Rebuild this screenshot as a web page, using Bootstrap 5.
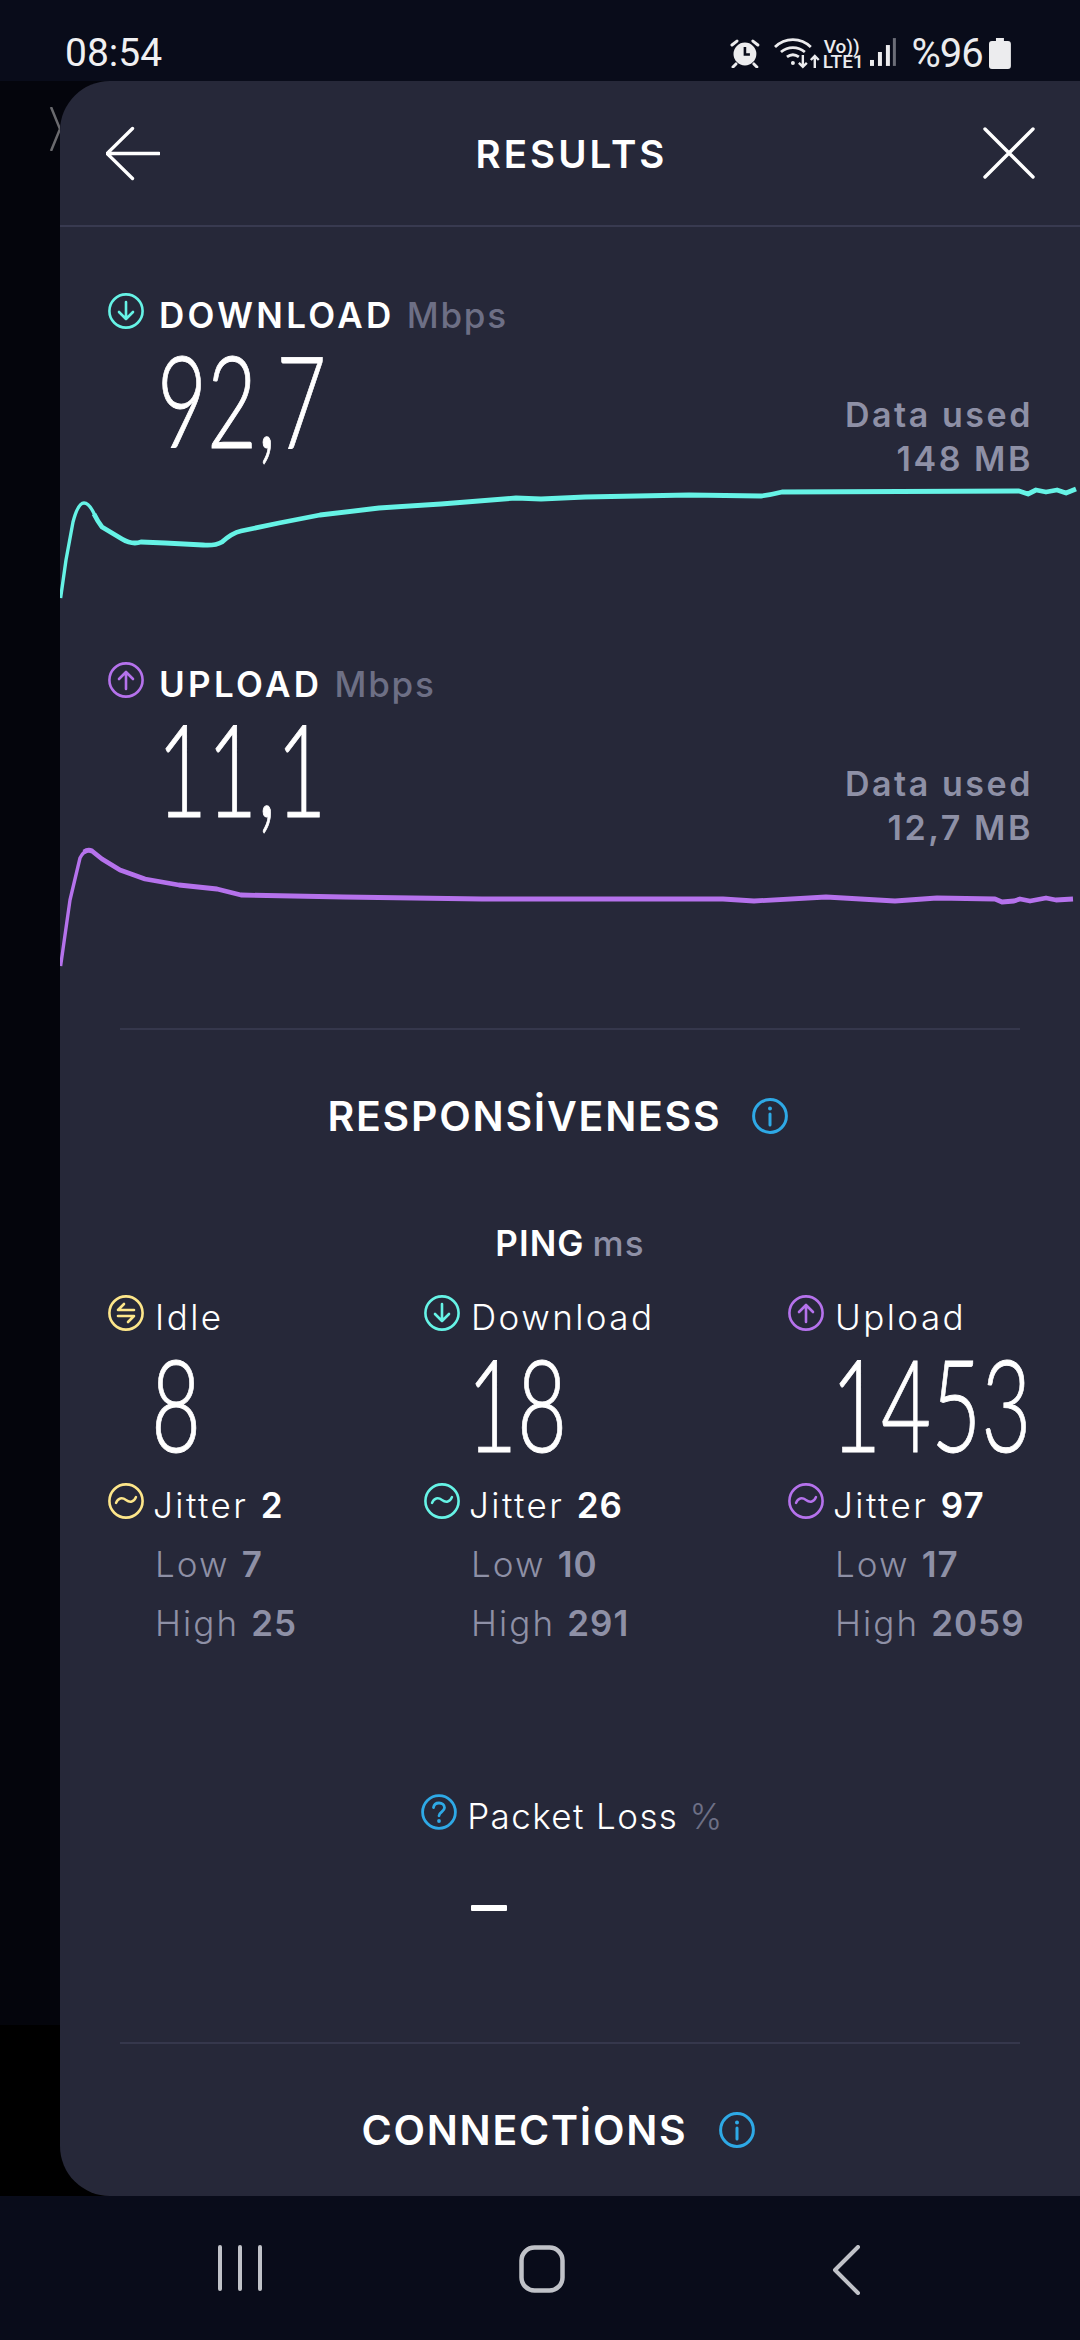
<!DOCTYPE html>
<html lang="en">
<head>
<meta charset="utf-8">
<title>Results</title>
<link href="https://cdn.jsdelivr.net/npm/bootstrap@5.3.0/dist/css/bootstrap.min.css" rel="stylesheet">
<style>
html,body{margin:0;width:1080px;height:2340px;overflow:hidden;background:#090c1a;font-family:Inter,"Open Sans",sans-serif;color:#fff}
.status-top{height:81px;padding:0 69px 0 65px}
.clock{font:400 39px/1 Roboto,sans-serif;margin-top:34px;color:#f0f0f2}
.status-icons{margin-top:38px;color:#ececee;width:281px}
.net-type{font:500 19px/15px Roboto,sans-serif;text-align:center;width:38px;margin-left:3px;margin-top:1px;white-space:nowrap}
.pct{font:400 40px/32px Roboto,sans-serif;margin-left:15px;width:78px;letter-spacing:-1px;white-space:nowrap}
.signal{margin-left:9px}
.wifi{margin-left:14px}
.stage{height:2115px;background:linear-gradient(#04050c 0,#04050c 1944px,#000 1944px)}
.left-strip{width:60px;flex:none}
.left-strip svg{display:block;margin-top:26px}
.sheet{flex:1;background:#262839;border-radius:50px 0 0 50px;overflow:hidden}
.sheet-head{height:146px;border-bottom:2px solid #383a50;padding:0 45px 0 46px}
.sheet-title{font-size:38.5px;font-weight:600;letter-spacing:.08em;line-height:1;padding-top:2px}
.speed-row{height:183px;padding:0 47px 0 48px}
.speed-row.first{margin-top:66px}
.speed-row.second{margin-top:56px}
.metric-head{height:36px;gap:15px}
.metric-name{font-size:35px;line-height:36px;font-weight:600;letter-spacing:.095em;margin-top:4px;white-space:nowrap}
.metric-name span{color:#6d6f85;font-weight:500;letter-spacing:.05em;margin-left:0}
.big-num{font-family:Lato,"Liberation Sans",sans-serif;font-weight:300;-webkit-text-stroke:.9px #fff;font-size:128px;line-height:100px;color:#fff;transform:scaleX(.675);transform-origin:0 0;white-space:nowrap}
.speed-num{margin:20px 0 0 49px}
.data-used{font-size:34px;line-height:44px;font-weight:600;color:#8e90a6;text-align:right;margin-bottom:-5px;letter-spacing:.075em;white-space:nowrap}
.chart{display:block;width:1020px;height:130px}
.rule{height:2px;background:#35374c;margin:0 60px}
.rule.top-rule{margin-top:53px}
.section-title{gap:31px;padding-right:24px;margin-top:68px;height:36px}
.section-title span{font-size:41px;font-weight:600;line-height:36px;letter-spacing:.043em;white-space:nowrap}
.ping-title{font-size:35px;line-height:36px;font-weight:600;margin-top:91px;gap:8px;letter-spacing:.03em}
.ping-title span{color:#8e90a6;font-weight:500}
.ping-cols{margin-top:34px;padding-left:48px}
.ping-a{width:316px;flex:none}.ping-b{width:364px;flex:none}.ping-c{width:232px;flex:none}
.ping-head{gap:11px;height:36px;font-size:35px;font-weight:300;line-height:36px;letter-spacing:.07em;white-space:nowrap}
.ping-head b{font-weight:600;letter-spacing:.03em}
.ping-head>span{margin-top:4px}
.ping-num{margin:22px 0 0 43px;height:100px}
.jit{margin-top:30px;gap:9px}
.sub-line{font-size:35px;font-weight:300;line-height:59px;color:#8e90a6;padding-left:47px;letter-spacing:.06em;white-space:nowrap}
.sub-line b{font-weight:600;letter-spacing:.03em}
.sub-first{margin-top:16px}
.loss{margin-top:141px;gap:10px;height:36px;padding-left:5px;font-size:35px;font-weight:300;line-height:36px;letter-spacing:.04em;white-space:nowrap}
.loss em{font-style:normal;color:#6d6f85}
.dash{width:36px;height:6px;background:#fff;border-radius:1px;margin:75px 0 0 411px}
.rule.low-rule{margin-top:131px}
.bottom-nav{height:144px;padding-top:49px}
.nav-slot{width:46px}
.nav-slot svg{display:block}
</style>
</head>
<body>
<svg width="0" height="0" class="d-block position-absolute">
  <defs>
    <symbol id="ic-down" viewBox="0 0 36 36"><circle cx="18" cy="18" r="16.6" fill="none" stroke="currentColor" stroke-width="2.6"/><path d="M18 9v17M11 19l7 7 7-7" fill="none" stroke="currentColor" stroke-width="2.6" stroke-linecap="round" stroke-linejoin="round"/></symbol>
    <symbol id="ic-up" viewBox="0 0 36 36"><circle cx="18" cy="18" r="16.6" fill="none" stroke="currentColor" stroke-width="2.6"/><path d="M18 27V10M11 17l7-7 7 7" fill="none" stroke="currentColor" stroke-width="2.6" stroke-linecap="round" stroke-linejoin="round"/></symbol>
    <symbol id="ic-idle" viewBox="0 0 36 36"><circle cx="18" cy="18" r="16.6" fill="none" stroke="currentColor" stroke-width="2.6"/><path d="M26 15H10l6-6M10 21h16l-6 6" fill="none" stroke="currentColor" stroke-width="2.6" stroke-linecap="round" stroke-linejoin="round"/></symbol>
    <symbol id="ic-wave" viewBox="0 0 36 36"><circle cx="18" cy="18" r="16.6" fill="none" stroke="currentColor" stroke-width="2.6"/><path d="M8 20c2-5 6-6 10-3s8 2 10-3" fill="none" stroke="currentColor" stroke-width="2.4" stroke-linecap="round"/></symbol>
    <symbol id="ic-info" viewBox="0 0 36 36"><circle cx="18" cy="18" r="16.4" fill="none" stroke="currentColor" stroke-width="3"/><path d="M18 16v11" fill="none" stroke="currentColor" stroke-width="3" stroke-linecap="round"/><circle cx="18" cy="10.5" r="2" fill="currentColor"/></symbol>
    <symbol id="ic-help" viewBox="0 0 36 36"><circle cx="18" cy="18" r="16.4" fill="none" stroke="currentColor" stroke-width="2.8"/><path d="M12.5 13.5c.5-3 2.800-4.500 5.500-4.500 3.200 0 5.500 2 5.500 4.800 0 3.800-5.500 4.200-5.500 8" fill="none" stroke="currentColor" stroke-width="2.8" stroke-linecap="round"/><circle cx="18" cy="27" r="1.900" fill="currentColor"/></symbol>
  </defs>
</svg>

<div class="status-top d-flex justify-content-between">
  <div class="clock">08:54</div>
  <div class="status-icons d-flex align-items-start">
    <svg width="30" height="30" viewBox="0 0 30 30" class="flex-none"><circle cx="15" cy="16" r="11.500" fill="#ececee"/><path d="M15 9v7.500h5" fill="none" stroke="#090c1a" stroke-width="2.600"/><path d="M2 7l5-4M28 7l-5-4M6 26l-3 3M24 26l3 3" stroke="#ececee" stroke-width="3" stroke-linecap="round"/></svg>
    <svg width="46" height="32" viewBox="0 0 46 32" class="wifi"><path d="M1 9C11-1 27-1 37 9M7 14c7-6 17-6 24 0M13 19c4-3 8-3 12 0" fill="none" stroke="#ececee" stroke-width="2.800"/><circle cx="19" cy="25" r="2" fill="#ececee"/><path d="M29 17v12M25 25l4 4 4-4M41 30V18M37 22l4-4 4 4" fill="none" stroke="#ececee" stroke-width="2.400"/></svg>
    <div class="net-type">Vo))<br>LTE1</div>
    <svg width="27" height="30" viewBox="0 0 27 30" class="signal"><rect x="0" y="22" width="4" height="6" fill="#ececee"/><rect x="8" y="14" width="4" height="14" fill="#ececee"/><rect x="16" y="7" width="4" height="21" fill="#ececee"/><rect x="23" y="0" width="3" height="28" fill="#6c6e78"/></svg>
    <div class="pct">%96</div>
    <svg width="22" height="31" viewBox="0 0 22 31"><path d="M7 0h8v3h4a3 3 0 0 1 3 3v22a3 3 0 0 1-3 3H3a3 3 0 0 1-3-3V6a3 3 0 0 1 3-3h4z" fill="#ececee"/></svg>
  </div>
</div>

<div class="stage d-flex">
  <div class="left-strip"><svg width="60" height="44" viewBox="0 0 60 44"><path d="M51 0l9 22L51 44" fill="none" stroke="#6a6a6e" stroke-width="2.500"/></svg></div>
  <main class="sheet">
    <header class="sheet-head d-flex align-items-center justify-content-between">
      <svg width="54" height="55" viewBox="0 0 55 55"><path d="M1 27.500h53M27 2L1 27.500 27 53" fill="none" stroke="#fff" stroke-width="3.400" stroke-linecap="round" stroke-linejoin="round"/></svg>
      <div class="sheet-title">RESULTS</div>
      <svg width="52" height="52" viewBox="0 0 52 52"><path d="M2 2l48 48M50 2L2 50" fill="none" stroke="#fff" stroke-width="3.400" stroke-linecap="round"/></svg>
    </header>

    <section class="speed-row first d-flex justify-content-between">
      <div>
        <div class="metric-head d-flex"><svg width="36" height="36" style="color:#66f3e6"><use href="#ic-down"/></svg><div class="metric-name">DOWNLOAD <span>Mbps</span></div></div>
        <div class="big-num speed-num">92,7</div>
      </div>
      <div class="data-used align-self-end">Data used<br>148 MB</div>
    </section>
    <svg class="chart" viewBox="60 476 1020 130">
      <path d="M60.600 598L66 560 73 522Q78 503 84 503 90 503 96 518" fill="none" stroke="#66f3e6" stroke-width="3.400" stroke-linejoin="round"/>
      <path d="M94 514Q98 522 102 527L122 539Q132 545 141 542L165 543 203 545Q215 546 222 542Q232 533 241 531L279 523 320 515 379 508 441 504 516 498 541 499 585 497 689 495 761 496Q770 495 782 492L1019 491 1028 494 1036 490 1046 492 1057 490 1066 493 1076 489" fill="none" stroke="#66f3e6" stroke-width="4.800" stroke-linejoin="round"/>
    </svg>

    <section class="speed-row second d-flex justify-content-between">
      <div>
        <div class="metric-head d-flex"><svg width="36" height="36" style="color:#b572ec"><use href="#ic-up"/></svg><div class="metric-name">UPLOAD <span>Mbps</span></div></div>
        <div class="big-num speed-num">11,1</div>
      </div>
      <div class="data-used align-self-end">Data used<br>12,7 MB</div>
    </section>
    <svg class="chart" viewBox="60 845 1020 130">
      <path d="M60.600 966L70 900 80 858Q84 850 90 850" fill="none" stroke="#b572ec" stroke-width="3.400" stroke-linejoin="round"/>
      <path d="M84 852Q88 849 92 851L102 859 120 870 145 879 179 885 217 889 241 895 344 897 482 899 723 899 754 901 826 897 895 901 937 898 995 899 1002 902 1014 901 1020 899 1030 901 1046 898 1056 900 1073 899" fill="none" stroke="#b572ec" stroke-width="4.800" stroke-linejoin="round"/>
    </svg>

    <div class="rule top-rule"></div>
    <div class="section-title d-flex justify-content-center align-items-center">
      <span>RESPONSİVENESS</span><svg width="36" height="36" class="flex-none" style="color:#2ea9e6"><use href="#ic-info"/></svg>
    </div>
    <div class="ping-title d-flex justify-content-center">PING<span>ms</span></div>

    <div class="ping-cols d-flex">
      <div class="ping-a">
        <div class="ping-head d-flex"><svg width="36" height="36" style="color:#fde68a"><use href="#ic-idle"/></svg><span>Idle</span></div>
        <div class="big-num ping-num">8</div>
        <div class="ping-head jit d-flex"><svg width="36" height="36" style="color:#fde68a"><use href="#ic-wave"/></svg><span>Jitter <b>2</b></span></div>
        <div class="sub-line sub-first">Low <b>7</b></div>
        <div class="sub-line">High <b>25</b></div>
      </div>
      <div class="ping-b">
        <div class="ping-head d-flex"><svg width="36" height="36" style="color:#66f3e6"><use href="#ic-down"/></svg><span>Download</span></div>
        <div class="big-num ping-num">18</div>
        <div class="ping-head jit d-flex"><svg width="36" height="36" style="color:#66f3e6"><use href="#ic-wave"/></svg><span>Jitter <b>26</b></span></div>
        <div class="sub-line sub-first">Low <b>10</b></div>
        <div class="sub-line">High <b>291</b></div>
      </div>
      <div class="ping-c">
        <div class="ping-head d-flex"><svg width="36" height="36" style="color:#b572ec"><use href="#ic-up"/></svg><span>Upload</span></div>
        <div class="big-num ping-num">1453</div>
        <div class="ping-head jit d-flex"><svg width="36" height="36" style="color:#b572ec"><use href="#ic-wave"/></svg><span>Jitter <b>97</b></span></div>
        <div class="sub-line sub-first">Low <b>17</b></div>
        <div class="sub-line">High <b>2059</b></div>
      </div>
    </div>

    <div class="loss d-flex justify-content-center">
      <svg width="36" height="36" style="color:#2ea9e6"><use href="#ic-help"/></svg><span class="mt-1">Packet Loss <em>%</em></span>
    </div>
    <div class="dash"></div>

    <div class="rule low-rule"></div>
    <div class="section-title d-flex justify-content-center align-items-center">
      <span>CONNECTİONS</span><svg width="36" height="36" class="flex-none" style="color:#2ea9e6"><use href="#ic-info"/></svg>
    </div>
  </main>
</div>

<nav class="bottom-nav d-flex">
  <div class="nav-slot" style="margin-left:218px"><svg width="46" height="46" viewBox="0 0 46 46"><path d="M2 2v42M22 2v42M42 2v42" stroke="#c0c2c8" stroke-width="4" stroke-linecap="round"/></svg></div>
  <div class="nav-slot" style="margin-left:255px"><svg width="46" height="48" viewBox="0 0 46 48"><rect x="2.500" y="2.500" width="41" height="43" rx="13" fill="none" stroke="#c0c2c8" stroke-width="4.500"/></svg></div>
  <div class="nav-slot" style="margin-left:267px"><svg width="30" height="50" viewBox="0 0 30 50"><path d="M26 2L3 25l23 23" fill="none" stroke="#c0c2c8" stroke-width="4" stroke-linecap="round" stroke-linejoin="round"/></svg></div>
</nav>
<script src="https://cdn.jsdelivr.net/npm/bootstrap@5.3.0/dist/js/bootstrap.bundle.min.js"></script>
</body>
</html>
